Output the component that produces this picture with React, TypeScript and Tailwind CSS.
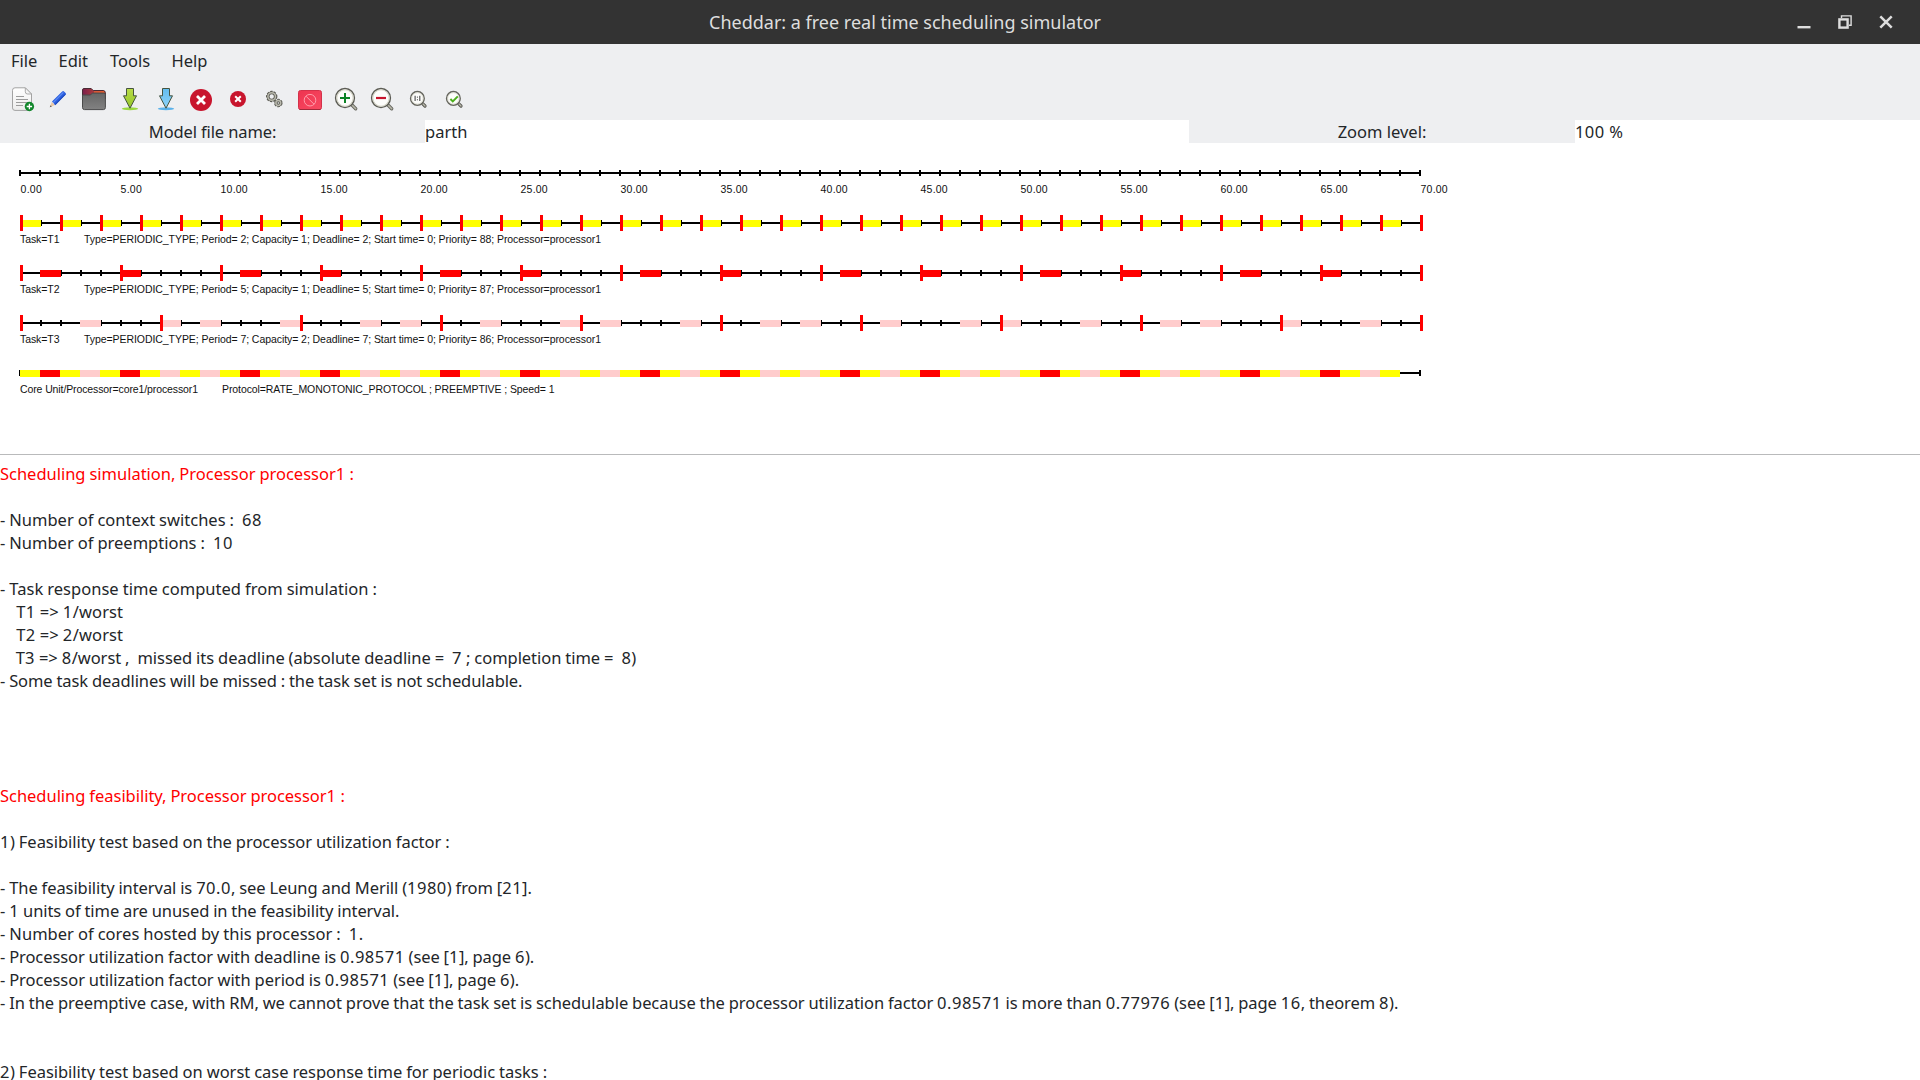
import type { ReactNode } from 'react';

const UNIT = 20;
const ORIGIN = 20;
const SPAN = 70;
const units = Array.from({ length: SPAN + 1 }, (_, i) => i);

const YELLOW = '#ffff00';
const RED = '#ff0000';
const PINK = '#ffcccc';

// Rate monotonic schedule: which task holds the core during each time unit.
function runningTask(unit: number): number | null {
  if (unit >= SPAN - 1) return null;
  if (unit % 2 === 0) return 0;
  return unit % 10 === 1 || unit % 10 === 5 ? 1 : 2;
}

const tasks = [
  { name: 'T1', period: 2, capacity: 1, priority: 88, color: YELLOW },
  { name: 'T2', period: 5, capacity: 1, priority: 87, color: RED },
  { name: 'T3', period: 7, capacity: 2, priority: 86, color: PINK },
];

function ChartText({ x, y, width, children }: { x: number; y: number; width: number; children: string }) {
  return (
    <text x={x} y={y} textLength={width} className="fill-[#111111] font-['Liberation_Sans',sans-serif] text-[10.5px]">
      {children}
    </text>
  );
}

function TimeAxis() {
  return (
    <g>
      <rect x={19} y={172} width={1402} height={2} />
      {units.map((i) => (
        <rect key={i} x={19 + i * UNIT} y={170} width={2} height={6} />
      ))}
      {units
        .filter((i) => i % 5 === 0)
        .map((i) => (
          <ChartText key={i} x={20.6 + i * UNIT} y={193} width={i < 10 ? 21.2 : 27}>
            {`${i}.00`}
          </ChartText>
        ))}
    </g>
  );
}

function TaskRow({ index }: { index: number }) {
  const task = tasks[index];
  const top = 222 + index * 50;
  return (
    <g>
      <rect x={20} y={top} width={1402} height={2} />
      {units.map((i) => (
        <rect key={i} x={ORIGIN + i * UNIT} y={top - 2} width={2} height={6} />
      ))}
      {units
        .filter((i) => runningTask(i) === index)
        .map((i) => (
          <rect key={i} x={ORIGIN + i * UNIT} y={top - 2} width={21} height={7} fill={task.color} />
        ))}
      {units
        .filter((i) => i % task.period === 0)
        .map((i) => (
          <rect key={i} x={ORIGIN + i * UNIT} y={top - 7} width={3} height={16} fill={RED} />
        ))}
      <ChartText x={20} y={top + 21} width={39.5}>
        {`Task=${task.name}`}
      </ChartText>
      <ChartText x={84} y={top + 21} width={517}>
        {`Type=PERIODIC_TYPE; Period= ${task.period}; Capacity= ${task.capacity}; Deadline= ${task.period}; Start time= 0; Priority= ${task.priority}; Processor=processor1`}
      </ChartText>
    </g>
  );
}

function CoreRow() {
  return (
    <g>
      <rect x={19} y={370} width={2} height={6} />
      <rect x={1400} y={372} width={21} height={2} />
      <rect x={1419} y={370} width={2} height={6} />
      {units.map((i) => {
        const t = runningTask(i);
        return t === null ? null : (
          <rect key={i} x={ORIGIN + i * UNIT} y={370} width={UNIT} height={7} fill={tasks[t].color} />
        );
      })}
      <ChartText x={20} y={393} width={178}>
        Core Unit/Processor=core1/processor1
      </ChartText>
      <ChartText x={222} y={393} width={332.5}>
        Protocol=RATE_MONOTONIC_PROTOCOL ; PREEMPTIVE ; Speed= 1
      </ChartText>
    </g>
  );
}

function Icon({ children }: { children: ReactNode }) {
  return (
    <svg className="h-6 w-6 shrink-0 overflow-visible" viewBox="0 0 24 24" fill="none">
      {children}
    </svg>
  );
}

function DownArrow({ from, to, glow }: { from: string; to: string; glow: string }) {
  const id = `arrow-${glow.slice(1)}`;
  return (
    <Icon>
      <linearGradient id={id} x1="0" y1="0" x2="0" y2="1">
        <stop offset="0" stopColor={from} />
        <stop offset="1" stopColor={to} />
      </linearGradient>
      <ellipse cx="12" cy="21.7" rx="8.2" ry="1.5" fill={glow} />
      <path d="M8.5 1.5h7v7.3h3L12 21.2 5.5 8.8h3z" fill={`url(#${id})`} stroke="#46543f" strokeWidth="1" strokeLinejoin="round" />
    </Icon>
  );
}

function Magnifier({ small, children }: { small?: boolean; children: ReactNode }) {
  return small ? (
    <Icon>
      <path d="M16.8 16.8l2.2 2.2" stroke="#55554f" strokeWidth="3.2" strokeLinecap="round" />
      <path d="M16.8 16.8l2.2 2.2" stroke="#b9b9ab" strokeWidth="1.4" strokeLinecap="round" />
      <circle cx="11.4" cy="11.4" r="6.8" fill="#fdfdfb" stroke="#66665f" strokeWidth="1.5" />
      <circle cx="11.4" cy="11.4" r="5.7" stroke="#d5d5c8" strokeWidth=".8" />
      {children}
    </Icon>
  ) : (
    <Icon>
      <path d="M18 18l3.7 3.7" stroke="#66665f" strokeWidth="3.4" strokeLinecap="round" />
      <path d="M18 18l3.7 3.7" stroke="#b9b9ab" strokeWidth="1.6" strokeLinecap="round" />
      <circle cx="11" cy="11" r="9.4" fill="#fdfdfb" stroke="#5c5c55" strokeWidth="1.5" />
      <circle cx="11" cy="11" r="8.2" stroke="#d3d3c5" strokeWidth="1.1" />
      {children}
    </Icon>
  );
}

function Gear({ cx, cy, r }: { cx: number; cy: number; r: number }) {
  return (
    <g>
      <circle cx={cx} cy={cy} r={r} stroke="#5c5c55" strokeWidth="3" strokeDasharray="2 1" />
      <circle cx={cx} cy={cy} r={r - 0.6} stroke="#5c5c55" strokeWidth="2.8" />
      <circle cx={cx} cy={cy} r={r - 0.4} stroke="#b9b9ad" strokeWidth="1.5" />
    </g>
  );
}

function Toolbar() {
  return (
    <div className="flex h-[44px] shrink-0 items-start gap-3 pt-[11px] pl-[10px]">
      <Icon>
        <linearGradient id="paper" x1="0" y1="0" x2="0" y2="1">
          <stop offset="0" stopColor="#ffffff" />
          <stop offset="1" stopColor="#ececec" />
        </linearGradient>
        <path d="M5 .8h10.3l6.2 6.2v14.2a2.2 2.2 0 0 1-2.2 2.2H5a2.5 2.5 0 0 1-2.5-2.5V3.3A2.5 2.5 0 0 1 5 .8z" fill="url(#paper)" stroke="#a3a3a3" />
        <path d="M15.3.8v4a2.2 2.2 0 0 0 2.2 2.2h4z" fill="#f4f4f4" stroke="#a3a3a3" strokeWidth=".9" />
        <path d="M6 9.5h8M6 12.5h12M6 15.5h12M6 18.5h7" stroke="#9b9b9b" />
        <circle cx="19.4" cy="19.5" r="4.7" fill="#10862a" />
        <path d="M16.7 19.5h5.4M19.4 16.8v5.4" stroke="#fff" strokeWidth="1.3" />
      </Icon>
      <Icon>
        <path d="M3.8 20.2l2-5.2 3.2 3z" fill="#ecc9a4" />
        <path d="M3.8 20.2l.8-2 1.2 1.2z" fill="#555" />
        <path d="M6 14.6L16.2 4.5a1.3 1.3 0 0 1 1.8 0L19.6 6a1.3 1.3 0 0 1 0 1.8L9.4 18.2z" fill="#2b5ede" />
        <path d="M7.2 15.6L17.4 5.4" stroke="#5b8bf5" strokeWidth="1.3" />
        <path d="M9 17.6L19.2 7.4" stroke="#1740ae" strokeWidth="1" />
      </Icon>
      <Icon>
        <linearGradient id="flap" x1="0" y1="0" x2="1" y2="0">
          <stop offset="0" stopColor="#7a1f4c" />
          <stop offset="1" stopColor="#d9532c" />
        </linearGradient>
        <linearGradient id="front" x1="0" y1="0" x2="0" y2="1">
          <stop offset="0" stopColor="#666666" />
          <stop offset="1" stopColor="#828282" />
        </linearGradient>
        <path d="M2 1.5h7.2l2 2H21a2.4 2.4 0 0 1 2.4 2.4V12H.5V3A1.5 1.5 0 0 1 2 1.5z" fill="url(#flap)" stroke="#4a2b35" />
        <path d="M12 5h10" stroke="#f06a35" strokeWidth="1.2" />
        <path d="M.5 8h7.6l2.6-1.9h11.2a1.5 1.5 0 0 1 1.5 1.5v13a2 2 0 0 1-2 2H2.5a2 2 0 0 1-2-2z" fill="url(#front)" stroke="#4b4b4b" />
      </Icon>
      <DownArrow from="#b8dc48" to="#94c62a" glow="#9ad83f" />
      <DownArrow from="#62bdf0" to="#8fd3f8" glow="#5bb2ea" />
      <Icon>
        <circle cx="11" cy="13" r="11" fill="#c8152d" />
        <path d="M7 9l8 8M15 9l-8 8" stroke="#fff" strokeWidth="2.8" />
      </Icon>
      <Icon>
        <circle cx="12" cy="12" r="8" fill="#c8152d" />
        <path d="M9.2 9.2l5.6 5.6M14.8 9.2l-5.6 5.6" stroke="#fff" strokeWidth="2" />
      </Icon>
      <Icon>
        <Gear cx={9.7} cy={9.5} r={4.2} />
        <Gear cx={16.3} cy={16} r={2.8} />
      </Icon>
      <Icon>
        <linearGradient id="stop" x1="0" y1="0" x2="1" y2="1">
          <stop offset="0" stopColor="#ee3450" />
          <stop offset="1" stopColor="#f84a62" />
        </linearGradient>
        <rect x=".5" y="3.5" width="23" height="19" rx="2" fill="url(#stop)" stroke="#d3324a" />
        <path d="M1.5 22.5h21" stroke="#a02a3a" strokeWidth="1" />
        <circle cx="12" cy="13.2" r="5.8" stroke="#ff9dab" strokeWidth="1" />
        <path d="M8 9.2l8 8" stroke="#ff9dab" strokeWidth="1" />
      </Icon>
      <Magnifier>
        <path d="M6 11h10M11 6v10" stroke="#0c8426" strokeWidth="2" />
      </Magnifier>
      <Magnifier>
        <path d="M6 11h10" stroke="#c8152d" strokeWidth="2.2" />
      </Magnifier>
      <Magnifier small>
        <path d="M9.1 8.8v5.2M13.8 8.8v5.2" stroke="#4a4a4a" strokeWidth="1.1" />
        <path d="M11.4 9.6v1.1M11.4 12.2v1.1" stroke="#4a4a4a" strokeWidth="1" />
      </Magnifier>
      <Magnifier small>
        <path d="M8.4 12l2.4 2.4 5-5" stroke="#4caf1d" strokeWidth="2" />
      </Magnifier>
    </div>
  );
}

type ReportLine = { text: string; className?: string };

const report: ReportLine[] = [
  { text: 'Scheduling simulation, Processor processor1 :', className: 'text-[#ff0000] tracking-[-0.020px]' },
  { text: '' },
  { text: '- Number of context switches :  68' },
  { text: '- Number of preemptions :  10' },
  { text: '' },
  { text: '- Task response time computed from simulation :', className: 'tracking-[0.020px]' },
  { text: '    T1 => 1/worst', className: 'tracking-[0.09px]' },
  { text: '    T2 => 2/worst', className: 'tracking-[0.09px]' },
  {
    text: '    T3 => 8/worst ,  missed its deadline (absolute deadline =  7 ; completion time =  8)',
    className: 'tracking-[-0.038px]',
  },
  { text: '- Some task deadlines will be missed : the task set is not schedulable.', className: 'tracking-[-0.086px]' },
  { text: '' },
  { text: '' },
  { text: '' },
  { text: '' },
  { text: 'Scheduling feasibility, Processor processor1 :', className: 'text-[#ff0000] tracking-[-0.030px]' },
  { text: '' },
  { text: '1) Feasibility test based on the processor utilization factor :', className: 'tracking-[-0.036px]' },
  { text: '' },
  { text: '- The feasibility interval is 70.0, see Leung and Merill (1980) from [21].', className: 'tracking-[-0.071px]' },
  { text: '- 1 units of time are unused in the feasibility interval.', className: 'tracking-[-0.080px]' },
  { text: '- Number of cores hosted by this processor :  1.', className: 'tracking-[0.020px]' },
  { text: '- Processor utilization factor with deadline is 0.98571 (see [1], page 6).', className: 'tracking-[-0.081px]' },
  { text: '- Processor utilization factor with period is 0.98571 (see [1], page 6).', className: 'tracking-[-0.065px]' },
  {
    text: '- In the preemptive case, with RM, we cannot prove that the task set is schedulable because the processor utilization factor 0.98571 is more than 0.77976 (see [1], page 16, theorem 8).',
    className: 'tracking-[-0.069px]',
  },
  { text: '' },
  { text: '' },
  { text: '2) Feasibility test based on worst case response time for periodic tasks :', className: 'tracking-[-0.030px]' },
];

// Numbers are set slightly wider than the surrounding words.
function spaced(text: string) {
  return text.split(/(\d+(?:\.\d+)?)/).map((part, i) =>
    i % 2 ? (
      <span key={i} className="tracking-[0.5px]">
        {part}
      </span>
    ) : (
      part
    ),
  );
}

export default function App() {
  return (
    <div className="flex h-[1080px] w-[1920px] flex-col overflow-hidden bg-white font-['Noto_Sans',sans-serif] text-[16.5px] text-[#232629]">
      <header className="flex h-11 shrink-0 items-center bg-[#333333] text-[#dedede]">
        <h1 className="flex-1 pl-[709px] text-[18px] leading-[44px]">Cheddar: a free real time scheduling simulator</h1>
        <div className="flex gap-[27px] pr-[27px]">
          <svg className="h-[14px] w-[14px]" viewBox="0 0 14 14">
            <path d="M.5 12.2h13" stroke="#dedede" strokeWidth="2.4" />
          </svg>
          <svg className="h-[14px] w-[14px]" viewBox="0 0 14 14" fill="none" stroke="#dedede">
            <path d="M3.5 3V.9h9.6v9.4H11" strokeWidth="1.4" />
            <rect x="1.4" y="4.4" width="8.2" height="8.2" strokeWidth="2.4" />
          </svg>
          <svg className="h-[14px] w-[14px]" viewBox="0 0 14 14">
            <path d="M1.3 1.3l11.4 11.4M12.7 1.3L1.3 12.7" stroke="#dedede" strokeWidth="2.5" />
          </svg>
        </div>
      </header>

      <div className="flex shrink-0 flex-col bg-[#eeeff1]">
        <nav className="flex h-8 items-start pl-[11px] pt-[6px] leading-[22px]">
          <span className="w-[47.5px]">File</span>
          <span className="w-[51.5px]">Edit</span>
          <span className="w-[61.5px]">Tools</span>
          <span>Help</span>
        </nav>
        <Toolbar />
      </div>

      <div className="flex h-[23px] shrink-0 leading-[23px]">
        <div className="w-[425px] bg-[#eeeff1] text-center tracking-[-0.12px]">Model file name:</div>
        <div className="w-[764px]">parth</div>
        <div className="w-[386px] bg-[#eeeff1] text-center">Zoom level:</div>
        <div className="flex-1 tracking-[0.4px]">100 %</div>
      </div>

      <svg className="h-[311px] w-[1920px] shrink-0" viewBox="0 143 1920 311" shapeRendering="crispEdges">
        <TimeAxis />
        {tasks.map((task, i) => (
          <TaskRow key={task.name} index={i} />
        ))}
        <CoreRow />
      </svg>

      <main className="min-h-0 flex-1 overflow-hidden border-t border-[#b9babb] pt-[7px] [word-spacing:-0.29px]">
        {report.map((line, i) => (
          <div key={i} className={`h-[23px] leading-[23px] whitespace-pre ${line.className ?? ''}`}>
            {spaced(line.text)}
          </div>
        ))}
      </main>
    </div>
  );
}
